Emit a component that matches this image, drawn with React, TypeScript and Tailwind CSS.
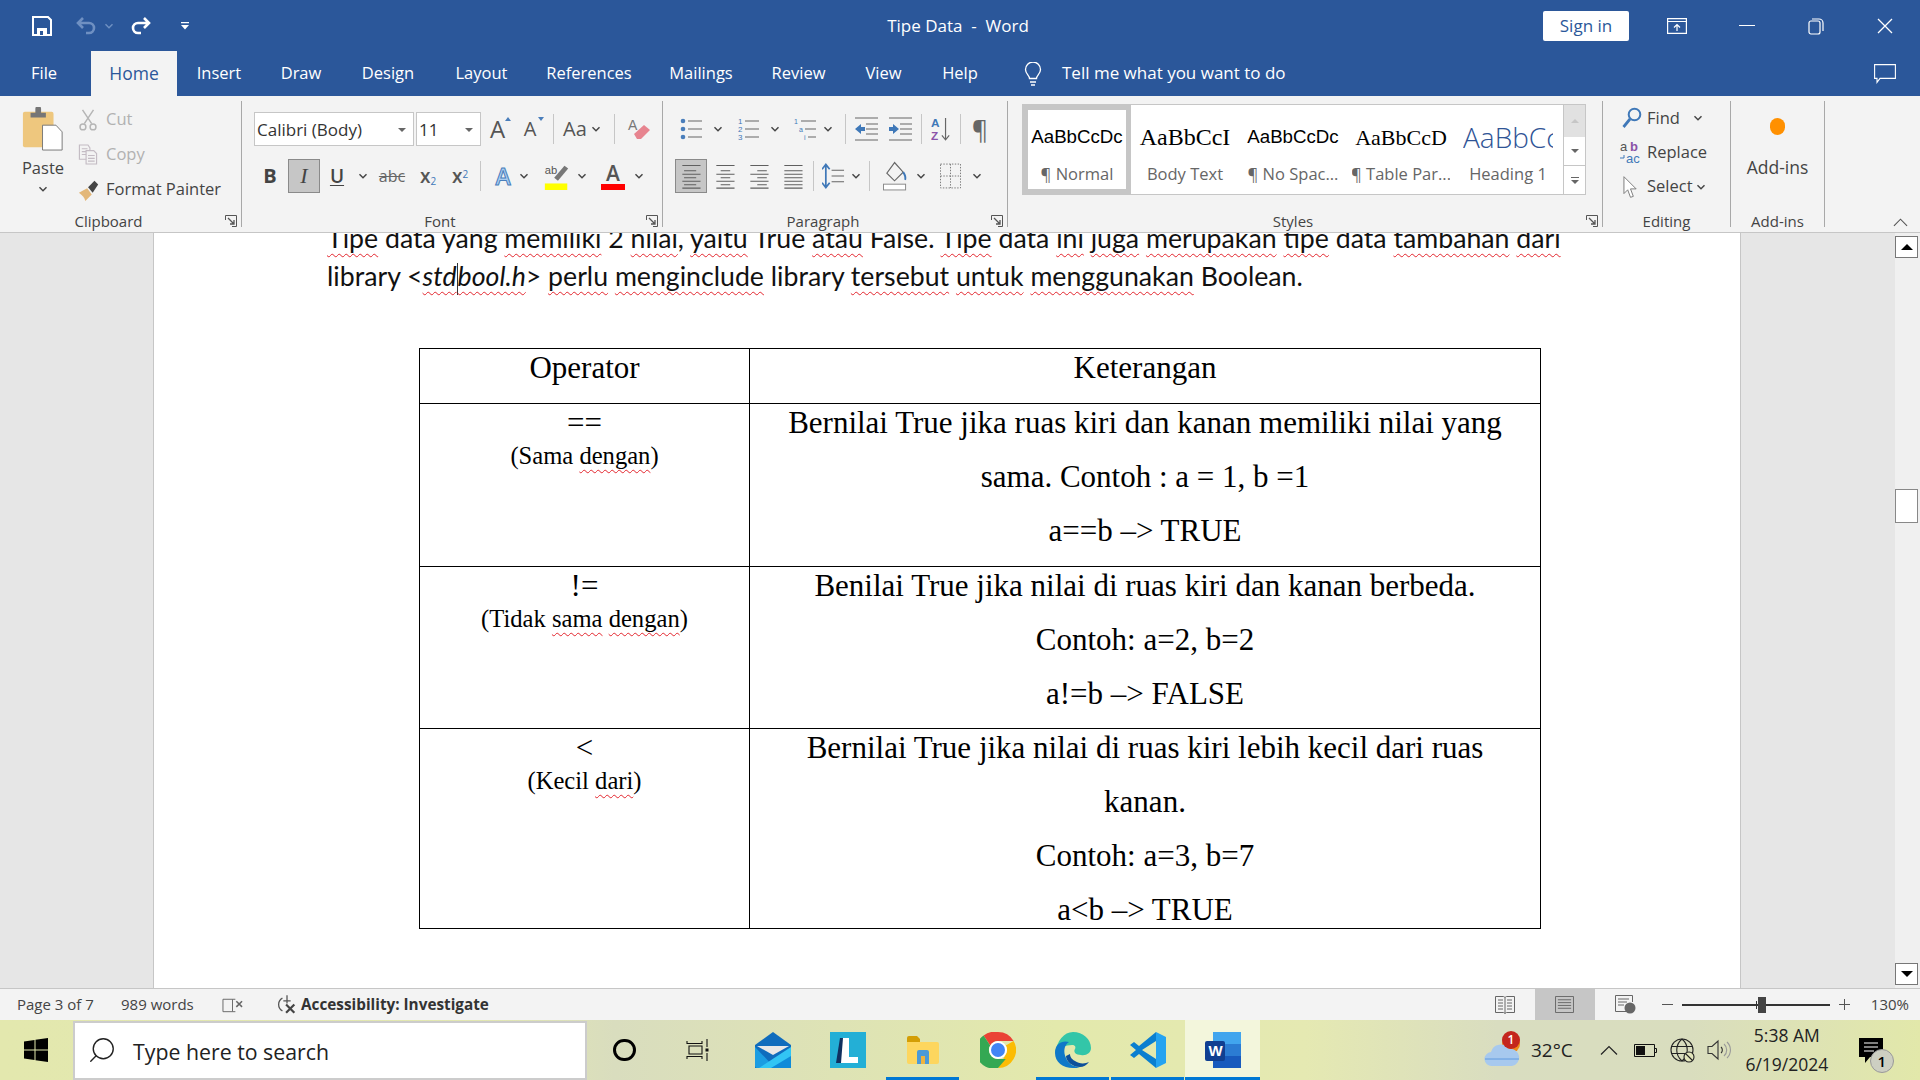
import type { ReactNode } from 'react';
import { Search } from 'lucide-react';

function Chev({ className = 'w-[10px] h-[10px]', color = '#444' }: { className?: string; color?: string }) {
  return (
    <svg viewBox="0 0 10 10" className={className} fill="none" stroke={color} strokeWidth="1.4">
      <path d="M1.5 3.2 5 6.8l3.5-3.6" />
    </svg>
  );
}

function Drop() {
  return <div className="w-0 h-0 border-x-[4px] border-x-transparent border-t-[4px] border-t-[#666]" />;
}

function Launcher() {
  return (
    <svg viewBox="0 0 12 12" className="absolute right-[4px] top-[3px] w-[12px] h-[12px]" fill="none" stroke="#555" strokeWidth="1">
      <path d="M.5 5V.5H11.5V11.5H7" />
      <path d="M3 3l6 6M9 5v4H5" strokeWidth="1.3" />
    </svg>
  );
}

function Group({ w, label, launcher, children }: { w: string; label: string; launcher?: boolean; children: ReactNode }) {
  return (
    <div className={`${w} h-full flex flex-col`}>
      <div className="flex-1 min-h-0">{children}</div>
      <div className={`relative h-[18px] mb-[2px] text-center text-[15px] leading-[18px] text-[#444] ${launcher ? 'pr-[24px]' : ''}`}>
        {label}
        {launcher && <Launcher />}
      </div>
    </div>
  );
}

function GroupSep() {
  return <div className="w-px h-[126px] mt-[5px] bg-[#a8a8a8] shrink-0" />;
}

function Sep({ className }: { className: string }) {
  return <div className={`w-px h-[30px] bg-[#c6c6c6] shrink-0 ${className}`} />;
}

function Lines({ align = 'left' }: { align?: 'left' | 'center' | 'right' | 'justify' }) {
  const short = { left: 'M3 9h14M3 17h14M3 25h14', center: 'M6 9h11M6 17h11M6 25h11', right: 'M9 9h11M9 17h11M9 25h11', justify: 'M1 9h21M1 17h21M1 25h21' }[align];
  return (
    <svg viewBox="0 0 22 30" className="w-[22px] h-[26px]" fill="none" stroke="#5f5f5f" strokeWidth="1.2">
      <path d="M1 3h21M1 13h21M1 21h21M1 29h21" />
      <path d={short} />
    </svg>
  );
}

function ListIcon({ kind }: { kind: 'bullet' | 'number' | 'multi' }) {
  return (
    <svg viewBox="0 0 23 24" className="w-[23px] h-[24px]" fill="none">
      {kind === 'bullet' && <path d="M8 4h14M8 12h14M8 20h14" stroke="#666" strokeWidth="1.2" />}
      {kind === 'bullet' && (
        <g fill="#4a7ebb">
          <circle cx="3" cy="4" r="2.3" />
          <circle cx="3" cy="12" r="2.3" />
          <circle cx="3" cy="20" r="2.3" />
        </g>
      )}
      {kind === 'number' && <path d="M8 4h14M8 12h14M8 20h14" stroke="#666" strokeWidth="1.2" />}
      {kind === 'number' && (
        <g fill="#3f78b8" fontSize="8" fontFamily="Liberation Sans">
          <text x="1" y="7">1</text>
          <text x="1" y="15">2</text>
          <text x="1" y="23">3</text>
        </g>
      )}
      {kind === 'multi' && <path d="M7 4h15M11 12h11M14 20h8" stroke="#666" strokeWidth="1.2" />}
      {kind === 'multi' && (
        <g fill="#3f78b8" fontSize="7" fontFamily="Liberation Sans">
          <text x="0" y="7">1</text>
          <text x="5" y="15">a</text>
          <text x="10" y="23">i</text>
        </g>
      )}
    </svg>
  );
}

function Indent({ dir }: { dir: 'in' | 'out' }) {
  return (
    <svg viewBox="0 0 23 26" className="w-[23px] h-[26px]" fill="none">
      <path d="M0 2h23M11 8h12M11 13h12M11 18h12M0 24h23" stroke="#666" strokeWidth="1.2" />
      <path d={dir === 'out' ? 'M0 13l6-5v3h4v4H6v3z' : 'M10 13 4 8v3H0v4h4v3z'} fill="#3f78b8" />
    </svg>
  );
}

function StyleItem({ sample, name, cls, active }: { sample: string; name: string; cls: string; active?: boolean }) {
  return (
    <div className={`w-[108px] shrink-0 h-full flex flex-col items-center overflow-hidden ${active ? 'border-[5px] border-[#c6c6c6]' : 'border-[5px] border-transparent'}`}>
      <div className={`h-[54px] w-full flex items-center justify-center whitespace-nowrap overflow-hidden ${cls}`}>{sample}</div>
      <div className="text-[16.5px] leading-[20px] text-[#666] whitespace-nowrap">{name}</div>
    </div>
  );
}

function Sq({ children }: { children: ReactNode }) {
  return <span className="underline decoration-wavy decoration-[#e3262e] decoration-1 underline-offset-[5px] [text-decoration-skip-ink:none]">{children}</span>;
}

function OpCell({ op, children }: { op: string; children: ReactNode }) {
  return (
    <td className="border border-black align-top text-center p-0">
      <div className="text-[31px] leading-[38px]">{op}</div>
      <div className="text-[24.6px] leading-[28px]">{children}</div>
    </td>
  );
}

function TextCell({ lines }: { lines: string[] }) {
  return (
    <td className="border border-black align-top text-center p-0">
      {lines.map((line) => (
        <div key={line} className="h-[54px] last:h-[37px] text-[31px] leading-[38px] whitespace-nowrap">{line}</div>
      ))}
    </td>
  );
}

function Slot({ active, children }: { active?: boolean; children: ReactNode }) {
  return (
    <div className={`relative w-[75px] h-full flex items-center justify-center shrink-0 ${active ? 'bg-[#f3f6dc]' : ''}`}>
      {children}
      {active && <div className="absolute left-0 right-0 bottom-0 h-[3px] bg-[#0078d4]" />}
    </div>
  );
}

function App() {
  return (
    <div className="w-[1920px] h-[1080px] overflow-hidden flex flex-col bg-[#e6e6e6] text-[#444] font-['Open_Sans','Noto_Sans',sans-serif]">
      {/* title bar */}
      <div className="h-[51px] bg-[#2b579a] flex items-center text-white shrink-0">
        <svg viewBox="0 0 20 20" className="ml-[32px] w-[20px] h-[20px]" fill="none" stroke="#fff" strokeWidth="2">
          <path d="M1 1h15l3 3v15H1z" />
          <path d="M5 12h10v7H5z" fill="#fff" stroke="none" />
          <path d="M8 15h3v4H8z" fill="#2b579a" stroke="none" />
        </svg>
        <svg viewBox="0 0 24 24" className="ml-[23px] w-[24px] h-[24px]" fill="none" stroke="#6f90c2" strokeWidth="2.6">
          <path d="M8 4 3 9l5 5M3 9h11a5 5 0 0 1 0 10h-3" />
        </svg>
        <Chev className="ml-[5px] w-[10px] h-[10px]" color="#6f90c2" />
        <svg viewBox="0 0 24 24" className="ml-[14px] w-[24px] h-[24px]" fill="none" stroke="#fff" strokeWidth="2.6">
          <path d="M16 4l5 5-5 5M21 9H10a5 5 0 0 0 0 10h3" />
        </svg>
        <svg viewBox="0 0 10 10" className="ml-[28px] w-[10px] h-[10px]" fill="#fff">
          <path d="M1 1h8v1.2H1zM1 4h8L5 8.5z" />
        </svg>
        <div className="ml-[688px] w-[160px] text-center text-[17px] whitespace-pre">Tipe Data  -  Word</div>
        <div className="ml-[505px] w-[86px] h-[30px] bg-white rounded-[2px] text-[#2b579a] text-[17px] leading-[30px] text-center">Sign in</div>
        <svg viewBox="0 0 20 16" className="ml-[38px] w-[20px] h-[16px]" fill="none" stroke="#fff" strokeWidth="1.2">
          <path d="M.6.6h18.8v14.8H.6zM.6 3.5h18.8" />
          <path d="M10 13V7M7 9.5 10 6.5l3 3" />
        </svg>
        <div className="ml-[52px] w-[16px] h-px bg-white" />
        <svg viewBox="0 0 16 18" className="ml-[53px] w-[16px] h-[18px]" fill="none" stroke="#fff" strokeWidth="1.2">
          <rect x="1" y="4" width="11" height="13" rx="2" />
          <path d="M4 2h7a4 4 0 0 1 4 4v8" />
        </svg>
        <svg viewBox="0 0 16 16" className="ml-[53px] w-[16px] h-[16px]" fill="none" stroke="#fff" strokeWidth="1.3">
          <path d="M1 1l14 14M15 1 1 15" />
        </svg>
      </div>

      {/* tabs */}
      <div className="h-[45px] bg-[#2b579a] flex items-center text-white text-[16.5px] shrink-0">
        <div className="w-[91px] pl-[31px]">File</div>
        <div className="w-[86px] h-full bg-[#f3f3f3] text-[#2b579a] text-[17.5px] leading-[44px] text-center">Home</div>
        <div className="w-[84px] text-center">Insert</div>
        <div className="w-[80px] text-center">Draw</div>
        <div className="w-[94px] text-center">Design</div>
        <div className="w-[93px] text-center">Layout</div>
        <div className="w-[122px] text-center">References</div>
        <div className="w-[102px] text-center">Mailings</div>
        <div className="w-[93px] text-center">Review</div>
        <div className="w-[77px] text-center">View</div>
        <div className="w-[76px] text-center">Help</div>
        <svg viewBox="0 0 18 24" className="ml-[26px] w-[18px] h-[24px]" fill="none" stroke="#fff" strokeWidth="1.3">
          <path d="M5.5 16.5c0-3-4-4.500-4-9a7.500 7.500 0 0 1 15 0c0 4.500-4 6-4 9zM6 20h6M7 23h4" />
        </svg>
        <div className="ml-[20px] -mt-[2px] text-[17px]">Tell me what you want to do</div>
        <svg viewBox="0 0 22 20" className="ml-auto mr-[24px] w-[22px] h-[20px]" fill="none" stroke="#fff" strokeWidth="1.1">
          <path d="M.6.6h20.800v13.800H6l-3 4v-4H.6z" />
        </svg>
      </div>

      {/* ribbon */}
      <div className="h-[137px] bg-[#f3f3f3] border-b border-[#c6c6c6] flex shrink-0">
        <Group w="w-[241px]" label="Clipboard" launcher>
          <div className="flex pt-[6px]">
            <div className="w-[78px] pl-[8px] flex flex-col items-center">
              <svg viewBox="0 0 42 46" className="mt-[5px] w-[42px] h-[44px]">
                <rect x="0" y="5" width="32" height="37" rx="2" fill="#eec77e" />
                <path d="M8 6h5V2a3 3 0 0 1 6 0v4h5v5H8z" fill="#767676" />
                <path d="M20.500 19h14l6.500 7v19H20.500z" fill="#fff" stroke="#777" strokeWidth="1" />
              </svg>
              <div className="mt-[7px] text-[16.5px] leading-[20px] text-[#444]">Paste</div>
              <Chev className="mt-[6px] w-[10px] h-[10px]" />
            </div>
            <div className="flex flex-col">
              <div className="h-[35px] flex items-center text-[#b1b1b1] text-[16.5px]">
                <svg viewBox="0 0 20 24" className="w-[20px] h-[22px]" fill="none" stroke="#b5b5b5" strokeWidth="1.6">
                  <path d="M4 1l10 15M16 1 6 16" />
                  <circle cx="4.500" cy="19.500" r="3.200" />
                  <circle cx="15.500" cy="19.500" r="3.200" />
                </svg>
                <span className="ml-[8px]">Cut</span>
              </div>
              <div className="h-[35px] flex items-center text-[#b1b1b1] text-[16.5px]">
                <svg viewBox="0 0 20 22" className="w-[20px] h-[21px]" fill="#f3f3f3" stroke="#c4bcc4" strokeWidth="1.2">
                  <path d="M1 1h9l2 3v12H1zM3.500 5h6M3.500 8h6M3.500 11h6" />
                  <path d="M8 7h8l3 3v11H8zM10 12h7M10 15h7M10 18h7" />
                </svg>
                <span className="ml-[8px]">Copy</span>
              </div>
              <div className="h-[35px] flex items-center text-[16.5px] text-[#444] whitespace-nowrap">
                <svg viewBox="0 0 24 24" className="w-[22px] h-[22px]">
                  <path d="M1 15l9-5 5 7-7 7c-1-4-3-6-7-9z" fill="#e3b778" />
                  <path d="M11 9l7-7 4 4-6 9z" fill="#444" />
                </svg>
                <span className="ml-[6px]">Format Painter</span>
              </div>
            </div>
          </div>
        </Group>
        <GroupSep />
        <Group w="w-[420px]" label="Font" launcher>
          <div className="pt-[16px] pl-[12px]">
            <div className="h-[34px] flex items-center">
              <div className="w-[160px] h-full bg-white border border-[#c6c6c6] flex items-center pl-[2px] pt-[2px] pr-[7px] justify-between text-[17px] text-[#333]">
                <span>Calibri (Body)</span>
                <Drop />
              </div>
              <div className="ml-[2px] w-[65px] h-full bg-white border border-[#c6c6c6] flex items-center pl-[2px] pt-[2px] pr-[7px] justify-between text-[17px] text-[#333]">
                <span>11</span>
                <Drop />
              </div>
              <div className="relative ml-[2px] w-[29px] text-center text-[24px] leading-[30px] text-[#555]">
                A
                <div className="absolute right-[1px] top-[3px] w-0 h-0 border-x-[3px] border-x-transparent border-b-[4px] border-b-[#4a7ebb]" />
              </div>
              <div className="relative ml-[3px] w-[30px] text-center text-[20px] leading-[30px] text-[#555]">
                A
                <div className="absolute right-[1px] top-[3px] w-0 h-0 border-x-[3px] border-x-transparent border-t-[4px] border-t-[#4a7ebb]" />
              </div>
              <Sep className="ml-[8px]" />
              <div className="ml-[9px] w-[27px] text-[20px] leading-[30px] whitespace-nowrap text-[#555]">Aa</div>
              <Chev className="ml-[1px] w-[10px] h-[10px]" />
              <Sep className="ml-[13px]" />
              <svg viewBox="0 0 26 24" className="ml-[11px] w-[26px] h-[24px]">
                <text x="2" y="13" fontSize="14" fill="#777" fontFamily="Liberation Sans">A</text>
                <path d="M8 17 18 8l6 5-9 9h-4z" fill="#e7848f" />
              </svg>
            </div>
            <div className="mt-[13px] h-[34px] flex items-center">
              <div className="w-[32px] text-center font-bold text-[20px] text-[#444]">B</div>
              <div className="ml-[2px] w-[32px] h-full bg-[#c6c6c6] border border-[#8a8a8a] text-center italic font-['Liberation_Serif',serif] text-[22px] leading-[32px] text-[#444]">I</div>
              <div className="ml-[2px] w-[30px] text-center font-semibold underline underline-offset-2 text-[19px] text-[#444]">U</div>
              <Chev className="ml-[6px] w-[10px] h-[10px]" />
              <div className="ml-[10px] w-[28px] text-center line-through text-[16px] text-[#666]">abc</div>
              <div className="ml-[8px] w-[28px] text-center text-[19px] font-semibold text-[#555]">
                x<sub className="text-[10px] font-normal text-[#3f78b8]">2</sub>
              </div>
              <div className="ml-[4px] w-[28px] text-center text-[19px] font-semibold text-[#555]">
                x<sup className="text-[10px] font-normal text-[#3f78b8]">2</sup>
              </div>
              <Sep className="ml-[6px]" />
              <div className="ml-[9px] w-[26px] text-center text-[23px] font-semibold text-[#a9cdf0] [-webkit-text-stroke:1px_#4a7ebb]">A</div>
              <Chev className="ml-[3px] w-[10px] h-[10px]" />
              <svg viewBox="0 0 26 30" className="ml-[15px] w-[26px] h-[28px]">
                <text x="0" y="13" fontSize="12" fill="#555" fontFamily="Liberation Sans">ab</text>
                <path d="M10 17 21 4l4 3-11 13z" fill="#777" />
                <rect x="0" y="23" width="24" height="7" fill="#ffff00" />
              </svg>
              <Chev className="ml-[7px] w-[10px] h-[10px]" />
              <div className="ml-[13px] w-[26px] flex flex-col items-center">
                <span className="text-[21px] leading-[22px] font-semibold text-[#555]">A</span>
                <div className="w-[24px] h-[6px] bg-[#ff0000]" />
              </div>
              <Chev className="ml-[8px] w-[10px] h-[10px]" />
            </div>
          </div>
        </Group>
        <GroupSep />
        <Group w="w-[344px]" label="Paragraph" launcher>
          <div className="pt-[16px] pl-[12px]">
            <div className="h-[34px] flex items-center">
              <div className="ml-[5px]"><ListIcon kind="bullet" /></div>
              <Chev className="ml-[10px] w-[10px] h-[10px]" />
              <div className="ml-[14px]"><ListIcon kind="number" /></div>
              <Chev className="ml-[10px] w-[10px] h-[10px]" />
              <div className="ml-[14px]"><ListIcon kind="multi" /></div>
              <Chev className="ml-[6px] w-[10px] h-[10px]" />
              <Sep className="ml-[12px]" />
              <div className="ml-[9px]"><Indent dir="out" /></div>
              <div className="ml-[11px]"><Indent dir="in" /></div>
              <Sep className="ml-[9px]" />
              <svg viewBox="0 0 22 28" className="ml-[9px] w-[20px] h-[28px]">
                <text x="0" y="12" fontSize="13" fontWeight="700" fill="#3f78b8" fontFamily="Liberation Sans">A</text>
                <text x="0" y="26" fontSize="13" fontWeight="700" fill="#8a52a8" fontFamily="Liberation Sans">Z</text>
                <path d="M16 2v23M12 21l4 5 4-5" stroke="#666" strokeWidth="1.3" fill="none" />
              </svg>
              <Sep className="ml-[9px]" />
              <div className="ml-[8px] w-[22px] text-center text-[25px] leading-[30px] text-[#666]">¶</div>
            </div>
            <div className="mt-[13px] h-[34px] flex items-center">
              <div className="w-[32px] h-full bg-[#c6c6c6] border border-[#8a8a8a] flex items-center justify-center"><Lines /></div>
              <div className="ml-[4px] w-[28px] flex justify-center"><Lines align="center" /></div>
              <div className="ml-[6px] w-[28px] flex justify-center"><Lines align="right" /></div>
              <div className="ml-[6px] w-[28px] flex justify-center"><Lines align="justify" /></div>
              <Sep className="ml-[6px]" />
              <svg viewBox="0 0 24 28" className="ml-[8px] w-[23px] h-[28px]" fill="none">
                <path d="M10 8h13M10 14h13M10 20h13" stroke="#666" strokeWidth="1.2" />
                <path d="M4 3v22M0 7l4-5 4 5M0 21l4 5 4-5" stroke="#3f78b8" strokeWidth="1.8" />
              </svg>
              <Chev className="ml-[6px] w-[10px] h-[10px]" />
              <Sep className="ml-[8px]" />
              <svg viewBox="0 0 26 30" className="ml-[13px] w-[25px] h-[30px]" fill="none">
                <path d="M12 1 4 12l8 8 9-9z" stroke="#666" strokeWidth="1.2" />
                <path d="M21 11c2 3 3 5 2 8" stroke="#3f78b8" strokeWidth="2" />
                <rect x=".5" y="23.500" width="23" height="6" fill="#fff" stroke="#888" />
              </svg>
              <Chev className="ml-[8px] w-[10px] h-[10px]" />
              <svg viewBox="0 0 22 26" className="ml-[14px] w-[21px] h-[26px]" fill="none" stroke="#777" strokeDasharray="1.500 1.500">
                <path d="M.5.5h21v25H.5zM11 .5v25M.5 13h21" />
              </svg>
              <Chev className="ml-[11px] w-[10px] h-[10px]" />
            </div>
          </div>
        </Group>
        <GroupSep />
        <Group w="w-[594px]" label="Styles" launcher>
          <div className="pt-[8px] pl-[14px]">
            <div className="w-[564px] h-[91px] bg-white border border-[#c6c6c6] flex">
              <div className="flex-1 min-w-0 flex overflow-hidden">
                <StyleItem active sample="AaBbCcDc" name="¶ Normal" cls="font-['Liberation_Sans',sans-serif] text-[18.7px] text-black" />
                <StyleItem sample="AaBbCcI" name="Body Text" cls="font-['Liberation_Serif',serif] text-[24px] text-black" />
                <StyleItem sample="AaBbCcDc" name="¶ No Spac..." cls="font-['Liberation_Sans',sans-serif] text-[18.7px] text-black" />
                <StyleItem sample="AaBbCcD" name="¶ Table Par..." cls="font-['Liberation_Serif',serif] text-[22px] text-black" />
                <div className="w-[100px] shrink-0 h-full flex flex-col items-center overflow-hidden pt-[5px] pl-[6px]">
                  <div className="h-[54px] w-[90px] flex items-center whitespace-nowrap overflow-hidden text-[28px] font-light text-[#2f5496]">AaBbCc</div>
                  <div className="text-[16.5px] leading-[20px] text-[#666] whitespace-nowrap">Heading 1</div>
                </div>
              </div>
              <div className="w-[22px] shrink-0 border-l border-[#c6c6c6] flex flex-col">
                <div className="h-[32px] bg-[#e1e1e1] flex items-center justify-center">
                  <div className="w-0 h-0 border-x-[4px] border-x-transparent border-b-[4px] border-b-[#c6c6c6]" />
                </div>
                <div className="h-[29px] flex items-center justify-center border-b border-[#c6c6c6]"><Drop /></div>
                <div className="flex-1 flex flex-col items-center justify-center gap-[2px]">
                  <div className="w-[8px] h-px bg-[#666]" />
                  <Drop />
                </div>
              </div>
            </div>
          </div>
        </Group>
        <GroupSep />
        <Group w="w-[127px]" label="Editing">
          <div className="pt-[5px] text-[16.5px] text-[#444]">
            <div className="h-[34px] flex items-center">
              <svg viewBox="0 0 20 22" className="ml-[19px] w-[20px] h-[22px]" fill="none" stroke="#3f78b8" strokeWidth="2">
                <circle cx="12.500" cy="7.500" r="5.800" />
                <path d="M8 12 1.500 20" strokeWidth="2.800" />
              </svg>
              <span className="ml-[5px]">Find</span>
              <Chev className="ml-[13px] w-[10px] h-[10px]" />
            </div>
            <div className="h-[34px] flex items-center">
              <svg viewBox="0 0 24 24" className="ml-[16px] w-[24px] h-[24px]">
                <text x="1" y="11" fontSize="13" fill="#555" fontFamily="Liberation Sans">a</text>
                <text x="11" y="11" fontSize="13" fontWeight="700" fill="#8a52a8" fontFamily="Liberation Sans">b</text>
                <text x="7" y="23" fontSize="13" fill="#3f78b8" fontFamily="Liberation Sans">ac</text>
                <path d="M5 15v3H1" fill="none" stroke="#3f78b8" />
              </svg>
              <span className="ml-[4px]">Replace</span>
            </div>
            <div className="h-[35px] flex items-center">
              <svg viewBox="0 0 16 24" className="ml-[20px] w-[15px] h-[24px]" fill="#fff" stroke="#777" strokeWidth="1">
                <path d="M1 1v18l4-4 3 8 3-1-3-8h6z" />
              </svg>
              <span className="ml-[9px]">Select</span>
              <Chev className="ml-[3px] w-[10px] h-[10px]" />
            </div>
          </div>
        </Group>
        <GroupSep />
        <Group w="w-[93px]" label="Add-ins">
          <div className="pt-[22px] flex flex-col items-center">
            <div className="w-[15px] h-[17px] rounded-full bg-[#ff9000]" />
            <div className="mt-[22px] text-[17.5px] leading-[20px] whitespace-nowrap">Add-ins</div>
          </div>
        </Group>
        <GroupSep />
        <div className="flex-1 flex items-end justify-end pr-[12px] pb-[5px]">
          <svg viewBox="0 0 16 9" className="w-[15px] h-[9px]" fill="none" stroke="#555" strokeWidth="1.2">
            <path d="M1 8l7-7 7 7" />
          </svg>
        </div>
      </div>

      {/* document */}
      <div className="h-[755px] flex overflow-hidden shrink-0">
        <div className="w-[153px] shrink-0 bg-[#e6e6e6]" />
        <div className="w-[1588px] shrink-0 bg-white border-x border-[#c6c6c6] overflow-hidden font-['Lato','Carlito',sans-serif] text-[26.7px] text-[#111]">
          <div className="-mt-[14px] pl-[173px]">
            <div className="h-[38px] leading-[38px] whitespace-nowrap">
              <Sq>Tipe</Sq> data yang <Sq>memiliki</Sq> 2 <Sq>nilai</Sq>, <Sq>yaitu</Sq> True <Sq>atau</Sq> False. <Sq>Tipe</Sq> data <Sq>ini</Sq> <Sq>juga</Sq> <Sq>merupakan</Sq> <Sq>tipe</Sq> data <Sq>tambahan</Sq> <Sq>dari</Sq>
            </div>
            <div className="h-[38px] leading-[38px] whitespace-nowrap">
              library &lt;<Sq><i>std<span className="inline-block w-0 h-[32px] border-l border-[#333] align-middle" />bool.h</i></Sq>&gt; <Sq>perlu</Sq> <Sq>menginclude</Sq> library <Sq>tersebut</Sq> <Sq>untuk</Sq> <Sq>menggunakan</Sq> Boolean.
            </div>
          </div>
          <table className="mt-[53px] ml-[265px] w-[1122px] table-fixed border-collapse font-['Liberation_Serif',serif] text-black">
            <colgroup>
              <col className="w-[330px]" />
              <col />
            </colgroup>
            <tbody>
              <tr className="h-[55px]">
                <td className="border border-black align-top text-center p-0 text-[31px] leading-[38px]">Operator</td>
                <td className="border border-black align-top text-center p-0 text-[31px] leading-[38px]">Keterangan</td>
              </tr>
              <tr className="h-[163px]">
                <OpCell op="==">(Sama <Sq>dengan</Sq>)</OpCell>
                <TextCell lines={['Bernilai True jika ruas kiri dan kanan memiliki nilai yang', 'sama. Contoh : a = 1, b =1', 'a==b –> TRUE']} />
              </tr>
              <tr className="h-[162px]">
                <OpCell op="!=">(Tidak <Sq>sama</Sq> <Sq>dengan</Sq>)</OpCell>
                <TextCell lines={['Benilai True jika nilai di ruas kiri dan kanan berbeda.', 'Contoh: a=2, b=2', 'a!=b –> FALSE']} />
              </tr>
              <tr className="h-[199px]">
                <OpCell op="<">(Kecil <Sq>dari</Sq>)</OpCell>
                <TextCell lines={['Bernilai True jika nilai di ruas kiri lebih kecil dari ruas', 'kanan.', 'Contoh: a=3, b=7', 'a<b –> TRUE']} />
              </tr>
            </tbody>
          </table>
        </div>
        <div className="w-[154px] shrink-0 bg-[#e6e6e6]" />
        <div className="w-[25px] shrink-0 bg-[#f0f0f0] flex flex-col pt-[3px] pr-[2px]">
          <div className="h-[22px] bg-white border border-[#777] flex items-center justify-center">
            <div className="w-0 h-0 border-x-[6px] border-x-transparent border-b-[6px] border-b-black" />
          </div>
          <div className="mt-[231px] h-[34px] bg-white border border-[#888]" />
          <div className="mt-auto mb-[3px] h-[22px] bg-white border border-[#777] flex items-center justify-center">
            <div className="w-0 h-0 border-x-[6px] border-x-transparent border-t-[6px] border-t-black" />
          </div>
        </div>
      </div>

      {/* status bar */}
      <div className="h-[32px] bg-[#f3f3f3] border-t border-[#c6c6c6] flex items-center text-[15px] text-[#444] shrink-0">
        <span className="ml-[17px] w-[104px]">Page 3 of 7</span>
        <span className="w-[101px]">989 words</span>
        <svg viewBox="0 0 22 18" className="w-[21px] h-[18px]" fill="none" stroke="#666">
          <path d="M11 3H1v13h10zM11 3h3M11 16h3" />
          <path d="M15 5l6 6M21 5l-6 6" strokeWidth="1.600" />
        </svg>
        <svg viewBox="0 0 24 22" className="ml-[33px] w-[22px] h-[21px]" fill="none" stroke="#555" strokeWidth="1.400">
          <path d="M7 4a8 8 0 0 0 0 14M12 1v9M8 7h8" />
          <path d="M11 11l9 9M20 11l-9 9" strokeWidth="2.400" stroke="#444" />
        </svg>
        <span className="ml-[3px] font-bold text-[15.3px] text-[#333]">Accessibility: Investigate</span>
        <div className="ml-auto flex items-center h-full">
          <svg viewBox="0 0 20 18" className="w-[20px] h-[18px] mr-[20px]" fill="none" stroke="#666">
            <path d="M.5.500h8l1.500 1 1.500-1h8v16h-8L10 17.500 8.500 16.500h-8zM10 2v15M3 4h5M3 7h5M3 10h5M3 13h5M12 4h5M12 7h5M12 10h5M12 13h5" />
          </svg>
          <div className="w-[60px] h-full bg-[#c6c6c6] flex items-center justify-center">
            <svg viewBox="0 0 20 18" className="w-[19px] h-[17px]" fill="none" stroke="#666">
              <path d="M.5.500h19v17H.5zM3 4h14M3 7h14M3 10h14M3 13h14" />
            </svg>
          </div>
          <svg viewBox="0 0 21 19" className="ml-[20px] w-[21px] h-[19px]" fill="none" stroke="#666">
            <path d="M12 16.500H.5V.500h17V7M3 4h11M3 7h9M3 10h6" />
            <circle cx="15" cy="13" r="5.500" fill="#666" stroke="none" />
          </svg>
          <div className="ml-[26px] w-[11px] h-px bg-[#555]" />
          <div className="relative ml-[9px] w-[148px] h-[2px] bg-[#333]">
            <div className="absolute left-[74px] -top-[3px] w-px h-[8px] bg-[#333]" />
            <div className="absolute left-[76px] -top-[7px] w-[8px] h-[16px] bg-[#444]" />
          </div>
          <div className="relative ml-[9px] w-[11px] h-[11px]">
            <div className="absolute left-0 top-[5px] w-[11px] h-px bg-[#555]" />
            <div className="absolute left-[5px] top-0 w-px h-[11px] bg-[#555]" />
          </div>
          <span className="ml-[21px] mr-[11px]">130%</span>
        </div>
      </div>

      {/* taskbar */}
      <div className="h-[60px] flex items-center text-[#111] shrink-0 bg-[linear-gradient(90deg,#e3e8ae_0%,#e2e7b0_25%,#d9ddbe_32%,#e3e9ac_55%,#e5e9b2_68%,#d9ddc0_78%,#d9ddbe_88%,#e2e8aa_100%)]">
        <svg viewBox="0 0 24 24" className="ml-[24px] w-[24px] h-[24px]" fill="#000">
          <path d="M0 3.500 10.500 2v9.500H0zM11.500 1.800 24 0v11.500H11.500zM0 12.500h10.500V22L0 20.500zM11.500 12.500H24V24l-12.500-1.800z" />
        </svg>
        <div className="ml-[25px] w-[514px] h-[59px] bg-white border-2 border-[#ccc] flex items-center">
          <Search className="ml-[12px] w-[30px] h-[30px] -scale-x-100 text-[#222]" strokeWidth={1.100} />
          <span className="ml-[16px] mt-[3px] text-[21.3px] text-[#222]">Type here to search</span>
        </div>
        <div className="h-full flex -ml-[2px]">
          <Slot>
            <div className="ml-[3px] w-[23px] h-[22px] rounded-full border-[3px] border-black" />
          </Slot>
          <Slot>
            <svg viewBox="0 0 24 24" className="w-[24px] h-[24px]" fill="none" stroke="#111" strokeWidth="1.100">
              <path d="M1 3v2.500h15V3M1 21v-2.500h15V21M3 8h13v8H3zM21 1v8M21 15v8" />
              <rect x="19.500" y="10.500" width="3" height="3" fill="#111" stroke="none" />
            </svg>
          </Slot>
          <Slot>
            <svg viewBox="0 0 36 36" className="w-[36px] h-[36px]">
              <path d="M0 13 18 0l18 13v23H0z" fill="#0f6cbd" />
              <path d="M2 14h32l-16 9z" fill="#e8e8e8" />
              <path d="M0 15v19a2 2 0 0 0 2 2h18z" fill="#1b9de2" />
              <path d="M36 15v21H4z" fill="#32c5f4" />
              <path d="M36 36H16l20-12z" fill="#0f8bd9" />
            </svg>
          </Slot>
          <Slot>
            <svg viewBox="0 0 36 36" className="w-[36px] h-[36px]">
              <rect width="36" height="36" fill="#23afd6" />
              <path d="M10 6h4l-2 25H6z" fill="#10305f" />
              <path d="M13 6h6v19h9v6H11z" fill="#fff" />
            </svg>
          </Slot>
          <div className="relative w-[75px] h-full flex items-center justify-center">
            <svg viewBox="0 0 32 28" className="w-[32px] h-[28px]">
              <path d="M0 2a2 2 0 0 1 2-2h8l3 3h0v3H0z" fill="#d39e05" />
              <path d="M0 6h30a2 2 0 0 1 2 2v18a2 2 0 0 1-2 2H2a2 2 0 0 1-2-2z" fill="#fdd65e" />
              <path d="M10 28V16a2 2 0 0 1 2-2h8a2 2 0 0 1 2 2v12h-4v-8h-4v8z" fill="#4b9ad8" />
              <path d="M14 20h4v8h-4z" fill="#eeb33e" />
            </svg>
            <div className="absolute left-0 right-0 bottom-0 h-[3px] mx-[1px] bg-[#0078d4]" />
          </div>
          <Slot>
            <svg viewBox="0 0 36 36" className="w-[36px] h-[36px]">
              <path d="M18 0a18 18 0 0 1 15.600 9H18a9 9 0 0 0-7.800 4.500L3.600 3.600A18 18 0 0 1 18 0z" fill="#ea4335" />
              <path d="M33.600 9A18 18 0 0 1 18 36l7.800-13.500A9 9 0 0 0 25.800 13.500z" fill="#fbbc04" />
              <path d="M18 36A18 18 0 0 1 3.600 3.600l6.600 9.900a9 9 0 0 0 7.800 13.500h7.800L18 36z" fill="#34a853" />
              <circle cx="18" cy="18" r="9" fill="#fff" />
              <circle cx="18" cy="18" r="7" fill="#4285f4" />
            </svg>
          </Slot>
          <div className="relative w-[75px] h-full flex items-center justify-center">
            <svg viewBox="0 0 36 36" className="w-[36px] h-[36px]">
              <path d="M18 0c10 0 18 7 18 16 0 5-5 8-10 7-5 0-8-3-6-6 1-2 0-4-3-4-6 0-14 3-17 8C2 9 9 0 18 0z" fill="#33c6a8" />
              <path d="M0 21C0 11 8 8 14 10c-5 3-6 10-3 16 2 5 7 9 14 9-2 1-5 1-7 1C8 36 0 30 0 21z" fill="#0f78c8" />
              <path d="M11 24c0 5 6 11 14 11 3 0 7-2 9-5-4 2-10 2-14-1-4-2-5-5-5-7z" fill="#0c4f9a" />
            </svg>
            <div className="absolute left-0 right-0 bottom-0 h-[3px] mx-[1px] bg-[#0078d4]" />
          </div>
          <div className="relative w-[75px] h-full flex items-center justify-center">
            <svg viewBox="0 0 36 36" className="w-[36px] h-[36px]">
              <path d="M26 0l10 5v26l-10 5z" fill="#24a3f1" />
              <path d="M26 0v9L12 18l14 9v9L9 22l-5 4-4-3 6-5-6-5 4-3 5 4z" fill="#0a7fd0" />
            </svg>
            <div className="absolute left-0 right-0 bottom-0 h-[3px] mx-[1px] bg-[#0078d4]" />
          </div>
          <Slot active>
            <svg viewBox="0 0 36 36" className="w-[36px] h-[36px]">
              <rect x="8" y="0" width="28" height="12" fill="#41a5ee" />
              <rect x="8" y="12" width="28" height="12" fill="#2b7cd3" />
              <rect x="8" y="24" width="28" height="12" fill="#185abd" />
              <rect x="0" y="9" width="20" height="20" rx="2" fill="#103f91" />
              <text x="3.500" y="24" fontSize="15" fontWeight="700" fill="#fff" fontFamily="Liberation Sans">W</text>
            </svg>
          </Slot>
        </div>
        <div className="relative ml-[224px] w-[36px] h-[36px]">
          <svg viewBox="0 0 36 36" className="w-[36px] h-[36px]">
            <circle cx="27" cy="12" r="9" fill="#ef8a1c" />
            <path d="M8 34a7 7 0 0 1-1-14 10 10 0 0 1 18-3 8 8 0 0 1 3 17z" fill="#a7c9ee" />
            <path d="M1 27h34" stroke="#5f9ae0" strokeWidth="1" />
          </svg>
          <div className="absolute left-[18px] -top-[1px] w-[18px] h-[18px] rounded-full bg-[#c4261d] text-white text-[12px] leading-[18px] text-center font-semibold">1</div>
        </div>
        <span className="ml-[11px] text-[19px] text-[#222]">32°C</span>
        <svg viewBox="0 0 18 10" className="ml-[27px] w-[18px] h-[10px]" fill="none" stroke="#222" strokeWidth="1.200">
          <path d="M1 9.500 9 1.500l8 8" />
        </svg>
        <svg viewBox="0 0 23 13" className="ml-[16px] w-[23px] h-[13px]" fill="none" stroke="#111">
          <path d="M.5.500h20v12H.5zM21 4.500h1.500v4H21" />
          <rect x="2" y="2" width="9" height="9" fill="#111" stroke="none" />
        </svg>
        <svg viewBox="0 0 25 25" className="ml-[13px] w-[25px] h-[25px]" fill="none" stroke="#222" strokeWidth="1.100">
          <circle cx="12" cy="12" r="11" />
          <path d="M1 8.500h22M1 15.500h22M12 1c-7 6-7 16 0 22M12 1c7 6 7 16 0 22" />
          <circle cx="19" cy="19" r="5" fill="#e2e5bb" />
          <path d="M15.500 15.500l7 7" />
        </svg>
        <svg viewBox="0 0 24 22" className="ml-[12px] w-[24px] h-[22px]" fill="none" stroke="#333" strokeWidth="1.100">
          <path d="M1 7.500h4L11 2v18L5 14.500H1z" />
          <path d="M14 8a4 4 0 0 1 0 6" />
          <path d="M17 5a8 8 0 0 1 0 12M20 3a11 11 0 0 1 0 16" stroke="#999" />
        </svg>
        <div className="ml-[9px] w-[94px] text-center text-[17.5px] leading-[29px] text-[#222] whitespace-nowrap">
          <div>5:38 AM</div>
          <div>6/19/2024</div>
        </div>
        <div className="relative ml-[25px] w-[24px] h-[25px] self-start mt-[18px]">
          <svg viewBox="0 0 24 25" className="w-[24px] h-[25px]">
            <path d="M0 0h24v19H11l-5 6v-6H0z" fill="#000" />
            <path d="M5 5h14M5 9h14M5 13h10" stroke="#fff" strokeWidth="1.100" />
          </svg>
          <div className="absolute left-[11px] top-[11px] w-[24px] h-[24px] rounded-full bg-[#cdcfc2] border border-[#999] text-center text-[15px] leading-[22px] font-semibold text-black">1</div>
        </div>
      </div>
    </div>
  );
}

export default App;
